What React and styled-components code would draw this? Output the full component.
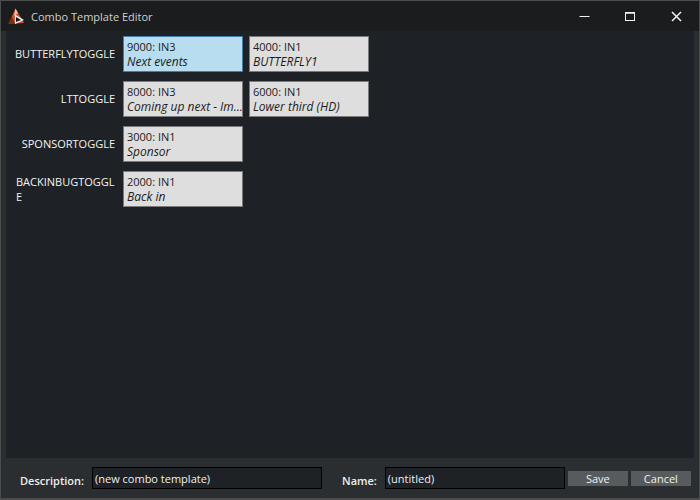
import React from "react";
import styled, { createGlobalStyle } from "styled-components";

const Global = createGlobalStyle`
  html, body { margin: 0; padding: 0; background: #2a2e31; }
  #root { width: 700px; height: 500px; overflow: hidden; }
`;

const Window = styled.div`
  box-sizing: border-box;
  width: 700px;
  height: 500px;
  display: flex;
  flex-direction: column;
  background: #2a2e31;
  border: 1px solid #4a4c4e;
  border-bottom-width: 2px;
  font-family: "Open Sans", "Noto Sans", sans-serif;
  font-size: 11px;
  color: #f0f0f0;
`;

const TitleBar = styled.div`
  height: 30px;
  flex: none;
  display: flex;
  align-items: center;
  background: #1b1c1e;
  padding-left: 7px;
`;

const Title = styled.span`
  margin-left: 6px;
  font-size: 11px;
  color: #cfcfcf;
  flex: 1;
`;

const WinButton = styled.button`
  width: 46px;
  height: 30px;
  padding: 0;
  border: 0;
  background: transparent;
  display: flex;
  align-items: center;
  justify-content: center;
`;

const Body = styled.div`
  flex: 1;
  min-height: 0;
  margin: 0 5px;
  padding: 5px 0 0 9px;
  background: #1e2226;
  display: flex;
  flex-direction: column;
  gap: 9px;
`;

const Row = styled.div`
  display: flex;
  align-items: center;
  height: 36px;
`;

const RowLabel = styled.div`
  width: 100px;
  margin: -1px 8px 0 0;
  line-height: 15px;
  text-align: ${(p) => (p.$wrapped ? "left" : "right")};
  padding-left: ${(p) => (p.$wrapped ? "1px" : "0")};
  box-sizing: border-box;
  white-space: ${(p) => (p.$wrapped ? "normal" : "nowrap")};
  overflow-wrap: anywhere;
  color: #f2f2f2;
`;

const Cards = styled.div`
  display: flex;
  gap: 6px;
`;

const Card = styled.div`
  box-sizing: border-box;
  width: 120px;
  height: 36px;
  padding: 2px 1px 0 3px;
  line-height: 15px;
  color: #1c1c1c;
  background: ${(p) => (p.$active ? "#b8dcf0" : "#dedede")};
  border: 1px solid ${(p) => (p.$active ? "#3f7fa8" : "#7a7a7a")};
`;

const CardTitle = styled.div`
  white-space: nowrap;
`;

const CardSub = styled.div`
  font-size: 12px;
  font-style: italic;
  white-space: nowrap;
`;

const Footer = styled.div`
  height: 40px;
  flex: none;
  display: flex;
  align-items: center;
  padding: 0 8px 0 19px;
`;

const FieldLabel = styled.span`
  font-weight: 600;
  font-size: 11px;
  color: #eeeeee;
  margin-top: 5px;
  margin-right: ${(p) => p.$gap}px;
  margin-left: ${(p) => p.$left || 0}px;
`;

const TextInput = styled.div`
  box-sizing: border-box;
  width: ${(p) => p.$width}px;
  height: 22px;
  padding: 0 2px;
  display: flex;
  align-items: center;
  background: #1e2226;
  border: 1px solid #000;
  color: #efefef;
`;

const Action = styled.button`
  width: 60px;
  height: 15px;
  margin-left: 3px;
  margin-top: 1px;
  padding: 0;
  border: 0;
  background: #575b5e;
  color: #f0f0f0;
  font: inherit;
  line-height: 15px;
`;

const Logo = () => (
  <svg width="17" height="17" viewBox="0 0 17 17">
    <path d="M7.5 0.5 L16 15 L0.5 16 Z" fill="#d9532c" />
    <path d="M7.5 0.5 L10 5 L6 8 Z" fill="#e8c0a8" />
    <path d="M0.5 16 L4 8 L7 16 Z" fill="#7a2d18" />
    <path d="M7 6.5 L16 12 L7 16 Z" fill="#f0f0f0" />
    <path d="M8 9 L13 12 L8 14 Z" fill="#141414" />
  </svg>
);

const rows = [
  { label: "BUTTERFLYTOGGLE", cards: [
    { t: "9000: IN3", s: "Next events", active: true },
    { t: "4000: IN1", s: "BUTTERFLY1" } ] },
  { label: "LTTOGGLE", cards: [
    { t: "8000: IN3", s: "Coming up next - Im..." },
    { t: "6000: IN1", s: "Lower third (HD)" } ] },
  { label: "SPONSORTOGGLE", cards: [{ t: "3000: IN1", s: "Sponsor" }] },
  { label: "BACKINBUGTOGGLE", wrapped: true, cards: [{ t: "2000: IN1", s: "Back in" }] },
];

export default function App() {
  return (
    <>
      <Global />
      <Window>
        <TitleBar>
          <Logo />
          <Title>Combo Template Editor</Title>
          <WinButton aria-label="Minimize">
            <svg width="11" height="11" viewBox="0 0 11 11"><path d="M0.5 5.5H10.5" stroke="#f2f2f2" strokeWidth="1" /></svg>
          </WinButton>
          <WinButton aria-label="Maximize">
            <svg width="11" height="11" viewBox="0 0 11 11" fill="none"><rect x="0.5" y="1.5" width="9" height="8" stroke="#f2f2f2" /><path d="M0.5 2H9.5" stroke="#f2f2f2" strokeWidth="1.5" /></svg>
          </WinButton>
          <WinButton aria-label="Close">
            <svg width="11" height="11" viewBox="0 0 11 11"><path d="M1 1L10 10M10 1L1 10" stroke="#f2f2f2" strokeWidth="1.5" /></svg>
          </WinButton>
        </TitleBar>
        <Body>
          {rows.map((r) => (
            <Row key={r.label}>
              <RowLabel $wrapped={r.wrapped}>{r.label}</RowLabel>
              <Cards>
                {r.cards.map((c) => (
                  <Card key={c.t} $active={c.active}>
                    <CardTitle>{c.t}</CardTitle>
                    <CardSub>{c.s}</CardSub>
                  </Card>
                ))}
              </Cards>
            </Row>
          ))}
        </Body>
        <Footer>
          <FieldLabel $gap={8}>Description:</FieldLabel>
          <TextInput $width={230}>(new combo template)</TextInput>
          <FieldLabel $left={20} $gap={8}>Name:</FieldLabel>
          <TextInput $width={180}>(untitled)</TextInput>
          <Action>Save</Action>
          <Action>Cancel</Action>
        </Footer>
      </Window>
    </>
  );
}
